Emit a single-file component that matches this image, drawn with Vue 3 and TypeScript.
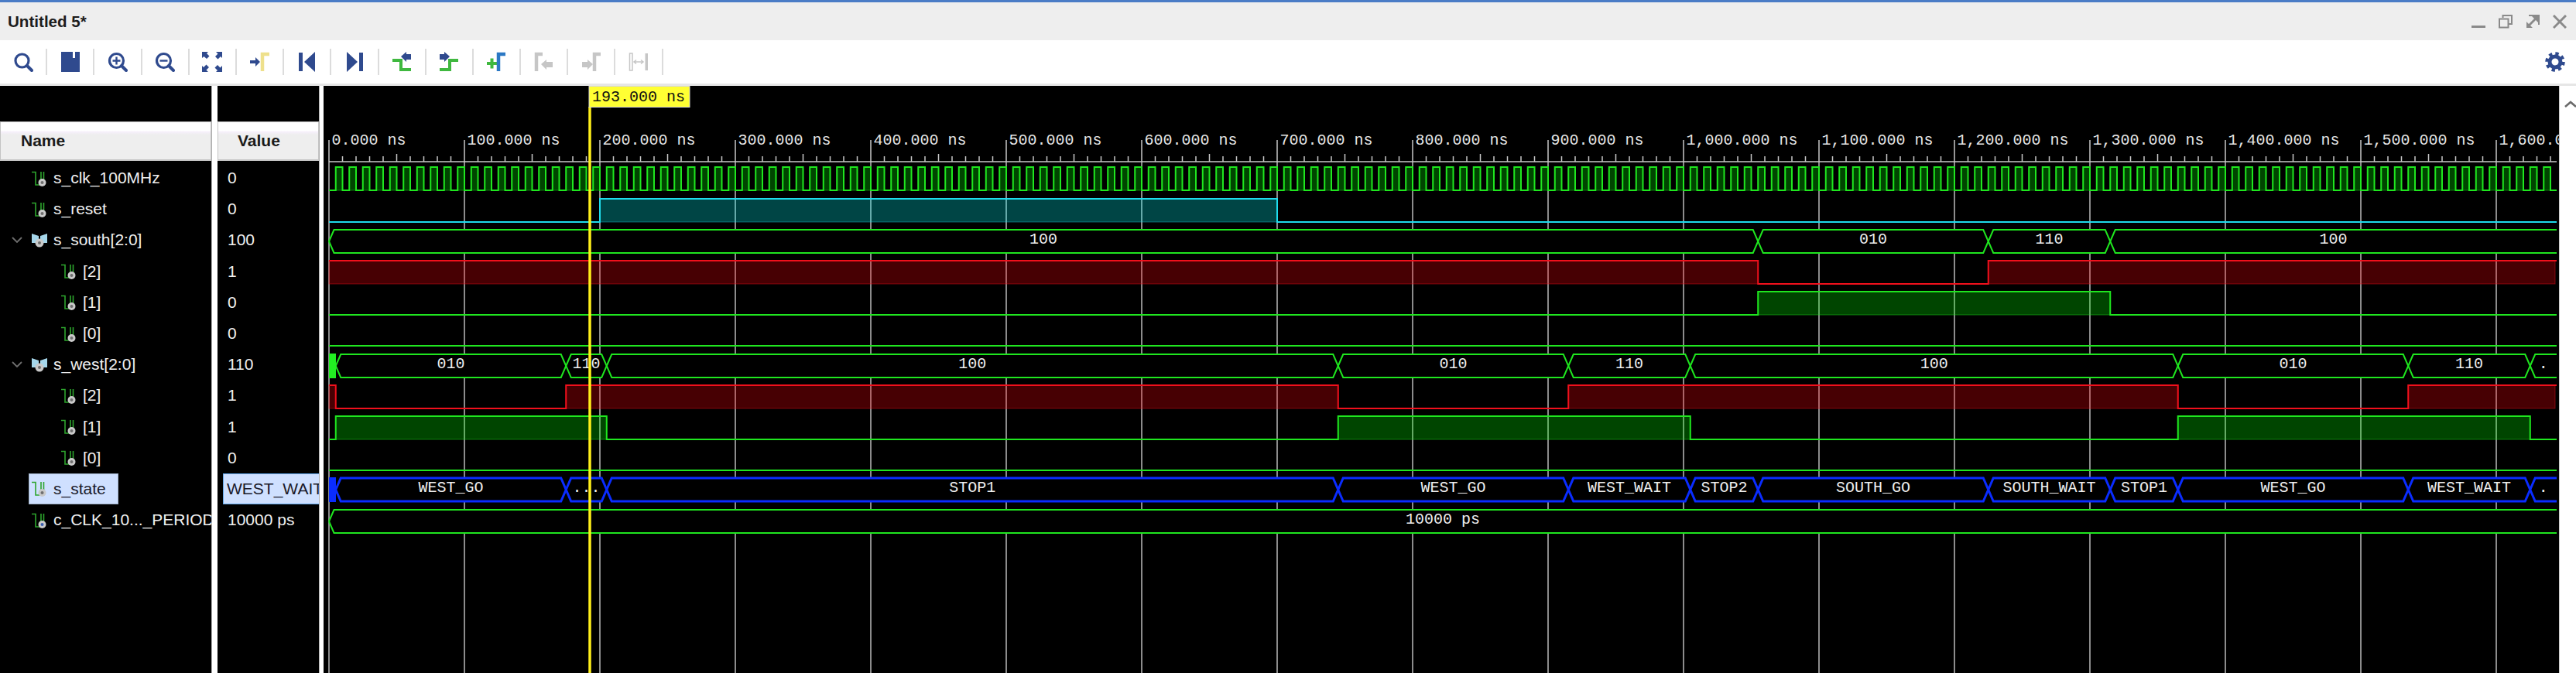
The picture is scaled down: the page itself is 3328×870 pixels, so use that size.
<script setup lang="ts">
interface Row {
  name: string
  value: string
  depth: number
  kind: 'wire' | 'bus' | 'param'
  selected?: boolean
}
interface BusSeg {
  fill: string
  line: string
  label: string
  cx: number
}
type Level = [number, number]

const rows: Row[] = [
  { name: 's_clk_100MHz', value: '0', depth: 0, kind: 'wire' },
  { name: 's_reset', value: '0', depth: 0, kind: 'wire' },
  { name: 's_south[2:0]', value: '100', depth: 0, kind: 'bus' },
  { name: '[2]', value: '1', depth: 1, kind: 'wire' },
  { name: '[1]', value: '0', depth: 1, kind: 'wire' },
  { name: '[0]', value: '0', depth: 1, kind: 'wire' },
  { name: 's_west[2:0]', value: '110', depth: 0, kind: 'bus' },
  { name: '[2]', value: '1', depth: 1, kind: 'wire' },
  { name: '[1]', value: '1', depth: 1, kind: 'wire' },
  { name: '[0]', value: '0', depth: 1, kind: 'wire' },
  { name: 's_state', value: 'WEST_WAIT', depth: 0, kind: 'wire', selected: true },
  { name: 'c_CLK_10..._PERIOD', value: '10000 ps', depth: 0, kind: 'param' }
]

// wave area starts at page x 418, y 111
const END_NS = 1644
const X_END = 2885
const tx = (t: number) => 7 + t * 1.75
const bottom = (row: number) => Math.round(135.4 + 40.2 * row)
const top = (row: number) => bottom(row) - 30

const majors: number[] = []
for (let t = 0; t <= 1600; t += 100) majors.push(t)

let minorPath = ''
for (let t = 10; t <= 1640; t += 10) {
  if (t % 100 === 0) continue
  minorPath += `M${tx(t)} ${t % 50 === 0 ? 88 : 91}V98`
}

const rulerLabel = (t: number) => `${t.toLocaleString('en-US')}.000 ns`

function highs(levels: Level[]) {
  return levels.map(([a, b]) => ({ x: tx(a), w: Math.min(tx(b), X_END - 2) - tx(a) }))
}

function wave(row: number, levels: Level[]) {
  const hi = top(row)
  const lo = bottom(row)
  let d = ''
  let cursor = 0
  let first = true
  for (const [a, b] of levels) {
    if (first) d += a === 0 ? `M${tx(0)} ${hi}` : `M${tx(0)} ${lo}H${tx(a)}V${hi}`
    else d += `H${tx(a)}V${hi}`
    first = false
    if (b >= END_NS) {
      d += `H${X_END}`
      cursor = b
    } else {
      d += `H${tx(b)}V${lo}`
      cursor = b
    }
  }
  if (cursor < END_NS) d += `H${X_END}`
  return { d, hi, h: lo - hi, fills: highs(levels) }
}

const clockLevels: Level[] = []
for (let t = 5; t < END_NS - 5; t += 10) clockLevels.push([t, t + 5])

const digital = [
  { color: 'green', ...wave(0, clockLevels) },
  { color: 'cyan', ...wave(1, [[200, 700]]) },
  { color: 'red', ...wave(3, [[0, 1055], [1225, END_NS]]) },
  { color: 'green', ...wave(4, [[1055, 1315]]) },
  { color: 'green', ...wave(5, []) },
  { color: 'red', ...wave(7, [[0, 5], [175, 745], [915, 1365], [1535, END_NS]]) },
  { color: 'green', ...wave(8, [[5, 205], [745, 1005], [1365, 1625]]) },
  { color: 'green', ...wave(9, []) }
]
// rows without a high level still need a flat line
digital[4].d = `M${tx(0)} ${bottom(5)}H${X_END}`
digital[7].d = `M${tx(0)} ${bottom(9)}H${X_END}`

function bus(row: number, edges: number[], labels: string[]): BusSeg[] {
  const hi = top(row)
  const lo = bottom(row)
  const mid = (hi + lo) / 2
  const s = 6.5
  return labels.map((label, i) => {
    const x0 = tx(edges[i])
    const last = i === labels.length - 1
    const x1 = last ? X_END : tx(edges[i + 1])
    const fill = last
      ? `${x0},${mid} ${x0 + s},${hi} ${x1},${hi} ${x1},${lo} ${x0 + s},${lo}`
      : `${x0},${mid} ${x0 + s},${hi} ${x1 - s},${hi} ${x1},${mid} ${x1 - s},${lo} ${x0 + s},${lo}`
    const line = last
      ? `M${x0} ${mid}L${x0 + s} ${hi}H${x1}M${x0} ${mid}L${x0 + s} ${lo}H${x1}`
      : `M${x0} ${mid}L${x0 + s} ${hi}H${x1 - s}L${x1} ${mid}L${x1 - s} ${lo}H${x0 + s}Z`
    return { fill, line, label, cx: (x0 + x1) / 2 }
  })
}

const westEdges = [5, 175, 205, 745, 915, 1005, 1365, 1535, 1625]
const stateEdges = [5, 175, 205, 745, 915, 1005, 1055, 1225, 1315, 1365, 1535, 1625]

const buses = [
  { row: 2, color: 'green', sw: 2, base: 17.5, segs: bus(2, [0, 1055, 1225, 1315], ['100', '010', '110', '100']) },
  { row: 6, color: 'green', sw: 2, base: 17.5, segs: bus(6, westEdges, ['010', '110', '100', '010', '110', '100', '010', '110', '.']) },
  {
    row: 10,
    color: 'blue',
    sw: 3,
    base: 18,
    segs: bus(10, stateEdges, ['WEST_GO', '...', 'STOP1', 'WEST_GO', 'WEST_WAIT', 'STOP2', 'SOUTH_GO', 'SOUTH_WAIT', 'STOP1', 'WEST_GO', 'WEST_WAIT', '.'])
  },
  { row: 11, color: 'green', sw: 2, base: 17.5, segs: bus(11, [0], ['10000 ps']) }
]

const CURSOR_X = 344
</script>

<template>
  <div class="app">
    <div class="accent"></div>

    <header class="titlebar">
      <span class="title">Untitled 5*</span>
      <div class="win-btns">
        <svg width="18" height="18" viewBox="0 0 18 18"><path class="win-line" d="M0 15.5h18" /></svg>
        <svg width="18" height="18" viewBox="0 0 18 18"><path class="win-thin" d="M5.5 4V1h11.5v11h-4M1 5.5h11.5v11H1z" /></svg>
        <svg width="18" height="18" viewBox="0 0 18 18">
          <path class="win-thin" d="M4 1h13v12" />
          <path class="win-fill" d="M16 2v8l-3-3-7 7 3 3H1V9l3 3 7-7-3-3z" />
        </svg>
        <svg width="18" height="18" viewBox="0 0 18 18"><path class="win-line" d="M1 1l16 16M17 1L1 17" /></svg>
      </div>
    </header>

    <nav class="toolbar">
      <div class="tool">
        <svg class="ico" viewBox="0 0 26 26"><circle class="ring" cx="11.5" cy="11.5" r="8.5" /><path class="handle" d="M18 18l6 6" /></svg>
      </div>
      <div class="tool">
        <svg class="ico" viewBox="0 0 26 26"><path class="navy" d="M1 0h24v26H1zM16 0v8h3V0z" fill-rule="evenodd" /></svg>
      </div>
      <div class="tool">
        <svg class="ico" viewBox="0 0 26 26"><circle class="ring" cx="11.5" cy="11.5" r="9" /><path class="thin" d="M6.5 11.5h10M11.5 6.5v10" /><path class="handle" d="M18 18l6 6" /></svg>
      </div>
      <div class="tool">
        <svg class="ico" viewBox="0 0 26 26"><circle class="ring" cx="11.5" cy="11.5" r="9" /><path class="thin" d="M6.5 11.5h10" /><path class="handle" d="M18 18l6 6" /></svg>
      </div>
      <div class="tool">
        <svg class="ico" viewBox="0 0 26 26">
          <path class="navy" d="M0 0h8L6 2l3.5 3.5-3.5 3.5L2.5 6 0 8zM26 0v8l-2-2-3.5 3.5L17 6l3.5-3.5L18 0zM0 26v-8l2 2 3.5-3.5L9 20l-3.5 3.5L8 26zM26 26h-8l2-2-3.5-3.5L20 17l3.5 3.5L26 18z" />
        </svg>
      </div>
      <div class="tool">
        <svg class="ico" viewBox="0 0 26 26">
          <path class="pale" d="M16 25V3h9" />
          <path class="navy" d="M0 11h7V7l6 6-6 6v-4H0z" />
        </svg>
      </div>
      <div class="tool">
        <svg class="ico" viewBox="0 0 26 26"><path class="navy" d="M2 1h5v24H2zM23 0v26L9 13z" /></svg>
      </div>
      <div class="tool">
        <svg class="ico" viewBox="0 0 26 26"><path class="navy" d="M24 1h-5v24h5zM3 0v26l14-13z" /></svg>
      </div>
      <div class="tool">
        <svg class="ico" viewBox="0 0 26 26">
          <path class="step" d="M1 11h11v12h13" />
          <path class="navy" d="M12 6l7-6v3h6v7h-6v3z" />
        </svg>
      </div>
      <div class="tool">
        <svg class="ico" viewBox="0 0 26 26">
          <path class="step" d="M1 23h13V11h11" />
          <path class="navy" d="M14 6L7 0v3H1v7h6v3z" />
        </svg>
      </div>
      <div class="tool">
        <svg class="ico" viewBox="0 0 26 26">
          <path class="step" d="M1 15h13M7.5 8.5v13" />
          <path class="sky" d="M16 25V3h9" />
        </svg>
      </div>
      <div class="tool">
        <svg class="ico" viewBox="0 0 26 26">
          <path class="off-line" d="M3 25V3h8" />
          <path class="off" d="M9 16l7-6v3h8v7h-8v3z" />
        </svg>
      </div>
      <div class="tool">
        <svg class="ico" viewBox="0 0 26 26">
          <path class="off-line" d="M17 25V3h8" />
          <path class="off" d="M15 16l-7-6v3H1v7h7v3z" />
        </svg>
      </div>
      <div class="tool">
        <svg class="ico" viewBox="0 0 26 26">
          <path class="off-thin" d="M1.5 2h3.5v22H1.5z" />
          <path class="off" d="M21.5 2h3.5v22h-3.5z" />
          <path class="off-thin" d="M7 13h12M10 10.5L7 13l3 2.5M16 10.5l3 2.5-3 2.5" />
        </svg>
      </div>
      <svg class="gear" viewBox="0 0 26 26">
        <circle class="gear-teeth" cx="13" cy="13" r="10.5" />
        <circle class="gear-body" cx="13" cy="13" r="7" />
      </svg>
    </nav>
    <div class="toolbar-edge"></div>

    <main class="viewer">
      <section class="col col-name">
        <div class="col-top"></div>
        <div class="col-head head-name">Name</div>
        <div class="list">
          <div v-for="(row, i) in rows" :key="i" class="row" :class="{ child: row.depth === 1 }">
            <span class="twist">
              <svg v-if="row.kind === 'bus'" width="14" height="8" viewBox="0 0 14 8"><path class="chev" d="M1 1l6 6 6-6" /></svg>
            </span>
            <span class="label" :class="{ selected: row.selected }">
              <svg v-if="row.kind === 'bus'" class="sig-ico" viewBox="0 0 20 20">
                <path class="bus-wing" d="M0 1l9 3v7l-4 2H0zM20 1l-9 3v7l4 2h5z" />
                <circle class="knob" cx="10" cy="13" r="5.5" />
                <circle class="knob-dot" cx="10" cy="13" r="2" />
              </svg>
              <svg v-else class="sig-ico" viewBox="0 0 20 20">
                <path class="wire" d="M0 1.5h5V18h5M12 1v10M15.5 1v10" />
                <circle class="knob" cx="13.5" cy="15" r="5" />
                <circle :class="row.kind === 'param' ? 'param-dot' : 'knob-dot'" cx="13.5" cy="15" r="2" />
              </svg>
              <span class="sig-name">{{ row.name }}</span>
            </span>
          </div>
        </div>
      </section>
      <div class="sep"></div>
      <section class="col col-value">
        <div class="col-top"></div>
        <div class="col-head head-value">Value</div>
        <div class="list">
          <div v-for="(row, i) in rows" :key="i" class="row value-row">
            <span class="value" :class="{ selected: row.selected }">{{ row.value }}</span>
          </div>
        </div>
      </section>
      <div class="sep sep-narrow"></div>

      <section class="wave-pane">
        <svg class="wave" width="2888" height="759" viewBox="0 0 2888 759">
          <!-- grid + ruler -->
          <path v-for="t in majors" :key="'g' + t" class="grid" :d="`M${tx(t)} 98V759`" />
          <path v-for="t in majors" :key="'m' + t" class="tick" :d="`M${tx(t)} 70V98`" />
          <path class="tick" d="M7 98H2885" />
          <path class="tick" :d="minorPath" />
          <text v-for="t in majors" :key="'r' + t" class="ruler-text" :x="tx(t) + 3.6" y="75.5">{{ rulerLabel(t) }}</text>

          <!-- single bit signals -->
          <g v-for="(sig, i) in digital" :key="'d' + i" :class="sig.color">
            <rect v-for="(f, j) in sig.fills" :key="j" class="high" :x="f.x" :y="sig.hi" :width="f.w" :height="sig.h" />
            <path class="trace" :d="sig.d" />
          </g>

          <!-- buses -->
          <g v-for="b in buses" :key="'b' + b.row" :class="b.color">
            <polygon v-for="(seg, j) in b.segs" :key="'f' + j" class="bus-fill" :points="seg.fill" />
            <path v-for="(seg, j) in b.segs" :key="'l' + j" class="trace" :stroke-width="b.sw" :d="seg.line" />
            <text v-for="(seg, j) in b.segs" :key="'t' + j" class="bus-text" :x="seg.cx" :y="top(b.row) + b.base">{{ seg.label }}</text>
          </g>
          <rect class="init-green" x="7" :y="top(6) - 1" width="9" height="32" />
          <rect class="init-blue" x="7" :y="top(10) - 1" width="9" height="32" />

          <!-- time cursor -->
          <path class="cursor" :d="`M${CURSOR_X} 27V759`" />
          <rect class="cursor-box" :x="CURSOR_X - 1" y="0.5" width="130" height="27" />
          <text class="cursor-text" :x="CURSOR_X + 3" y="20">193.000 ns</text>
        </svg>
      </section>

      <aside class="scrollbar">
        <svg width="16" height="9" viewBox="0 0 16 9"><path class="scroll-chev" d="M1 8l7-6 7 6" /></svg>
      </aside>
    </main>
  </div>
</template>

<style scoped>
.app {
  height: 870px;
  display: flex;
  flex-direction: column;
  overflow: hidden;
  font-family: 'Liberation Sans', Arial, sans-serif;
  font-size: 21px;
}
.accent {
  height: 3px;
  background: #4a7cc6;
}
.titlebar {
  height: 49px;
  background: #eeeeee;
  display: flex;
  align-items: center;
  justify-content: space-between;
  padding: 0 12px 0 10px;
  box-sizing: border-box;
}
.title {
  font-weight: bold;
  font-size: 20.6px;
  color: #1c1c1c;
}
.win-btns {
  display: flex;
  gap: 17px;
}
.win-line {
  stroke: #8a8a8a;
  stroke-width: 3;
  fill: none;
}
.win-thin {
  stroke: #8a8a8a;
  stroke-width: 2;
  fill: none;
}
.win-fill {
  fill: #8a8a8a;
}

.toolbar {
  height: 56px;
  background: #fff;
  display: flex;
  align-items: center;
  position: relative;
}
.tool {
  width: 61.2px;
  height: 34px;
  box-sizing: border-box;
  border-right: 2px solid #dcdcdc;
  display: flex;
  align-items: center;
  justify-content: center;
  flex: none;
}
.ico {
  width: 26px;
  height: 26px;
}
.ring {
  fill: none;
  stroke: #2f4a8e;
  stroke-width: 3.2;
}
.handle {
  stroke: #2f4a8e;
  stroke-width: 4;
  stroke-linecap: round;
}
.thin {
  stroke: #2f4a8e;
  stroke-width: 2.4;
  fill: none;
}
.navy {
  fill: #2f4a8e;
}
.pale {
  fill: none;
  stroke: #eee08c;
  stroke-width: 4.5;
}
.step {
  fill: none;
  stroke: #3fb83f;
  stroke-width: 4;
}
.sky {
  fill: none;
  stroke: #2b78c4;
  stroke-width: 4.5;
}
.off {
  fill: #c6c6c6;
}
.off-line {
  fill: none;
  stroke: #c6c6c6;
  stroke-width: 4.5;
}
.off-thin {
  fill: none;
  stroke: #c6c6c6;
  stroke-width: 1.5;
}
.gear {
  margin-left: auto;
  margin-right: 14px;
  width: 26px;
  height: 26px;
}
.gear-teeth {
  fill: none;
  stroke: #2f4a8e;
  stroke-width: 4.5;
  stroke-dasharray: 4.2 4.05;
}
.gear-body {
  fill: #fff;
  stroke: #2f4a8e;
  stroke-width: 5;
}
.toolbar-edge {
  height: 3px;
  background: #e6e6e6;
}

.viewer {
  flex: 1;
  min-height: 0;
  display: flex;
  background: #fff;
}
.col {
  background: #000;
  flex: none;
  overflow: hidden;
}
.col-name {
  width: 273px;
}
.col-value {
  width: 131px;
}
.col-top {
  height: 46px;
}
.col-head {
  height: 51px;
  box-sizing: border-box;
  font-weight: bold;
  color: #1a1a1a;
  display: flex;
  align-items: center;
  background: linear-gradient(#ffffff 0, #ffffff 22%, #f6f0fa 26%, #eeeeee 34%);
  border: 1px solid #c4c4c4;
  border-bottom-width: 2px;
}
.head-name {
  padding-left: 26px;
}
.head-value {
  padding-left: 25px;
}
.list {
  padding-top: 2px;
}
.sep {
  width: 8px;
  flex: none;
  background: #fff;
  border-left: 1px solid #b0b0b0;
  box-sizing: border-box;
}
.sep-narrow {
  width: 6px;
}
.row {
  height: 40.2px;
  display: flex;
  align-items: center;
  white-space: nowrap;
  padding-left: 15px;
  color: #f0f0f0;
}
.row.child {
  padding-left: 53px;
}
.twist {
  width: 22px;
  flex: none;
  display: flex;
}
.chev {
  fill: none;
  stroke: #6e6e6e;
  stroke-width: 1.8;
}
.label {
  height: 40px;
  box-sizing: border-box;
  display: flex;
  align-items: center;
  padding: 0 15px 0 3px;
  border: 1px solid transparent;
}
.label.selected {
  background: #cfe0ff;
  border-color: #9fb1c9;
  color: #1a1a2a;
}
.sig-ico {
  width: 20px;
  height: 20px;
  flex: none;
  margin-right: 8px;
  margin-top: 1px;
}
.wire {
  fill: none;
  stroke: #2da52d;
  stroke-width: 1.6;
}
.bus-wing {
  fill: #a5d6ea;
}
.knob {
  fill: #c9c9c9;
}
.knob-dot {
  fill: #6f6f6f;
}
.param-dot {
  fill: #3a5fb0;
}
.value-row {
  padding-left: 7px;
}
.value {
  height: 40px;
  width: 100%;
  box-sizing: border-box;
  display: flex;
  align-items: center;
  padding-left: 5px;
  border: 1px solid transparent;
}
.value.selected {
  background: #cfe0ff;
  border-color: #62a8ea;
  border-right: none;
  color: #1a1a2a;
  padding-left: 4px;
}

.wave-pane {
  width: 2888px;
  flex: none;
  background: #000;
}
.wave {
  display: block;
  font-family: 'Liberation Mono', 'Courier New', monospace;
  font-size: 20px;
}
.grid {
  stroke: #8c8c8c;
  stroke-width: 2;
}
.tick {
  stroke: #c8c8c8;
  stroke-width: 1.5;
  fill: none;
}
.ruler-text {
  fill: #e6e6e6;
}
.trace {
  fill: none;
  stroke-width: 2;
}
.green .trace {
  stroke: #1fe61f;
}
.red .trace {
  stroke: #f0101c;
}
.cyan .trace {
  stroke: #1fdcec;
}
.blue .trace {
  stroke: #0a2cff;
  stroke-width: 3;
}
.green .high {
  fill: rgba(0, 255, 0, 0.27);
  stroke: rgba(31, 230, 31, 0.45);
}
.red .high {
  fill: rgba(255, 0, 10, 0.28);
  stroke: rgba(240, 16, 28, 0.45);
}
.cyan .high {
  fill: rgba(0, 255, 255, 0.27);
  stroke: rgba(31, 220, 236, 0.4);
}
.bus-fill {
  fill: #000;
}
.bus-text {
  fill: #eeeeee;
  text-anchor: middle;
}
.init-green {
  fill: #22ee22;
}
.init-blue {
  fill: #0a2cff;
}
.cursor {
  stroke: #ffef1a;
  stroke-width: 3.5;
}
.cursor-box {
  fill: #ffff33;
  stroke: #d8d8d8;
  stroke-width: 1;
}
.cursor-text {
  fill: #111;
}
.scrollbar {
  flex: 1;
  border-left: 1px solid #c8c8c8;
  background: #fff;
  padding: 9px 0 0 6px;
  box-sizing: border-box;
}
.scroll-chev {
  fill: none;
  stroke: #6a6a6a;
  stroke-width: 2.5;
}
</style>

<style>
html,
body {
  margin: 0;
  background: #fff;
}
</style>
